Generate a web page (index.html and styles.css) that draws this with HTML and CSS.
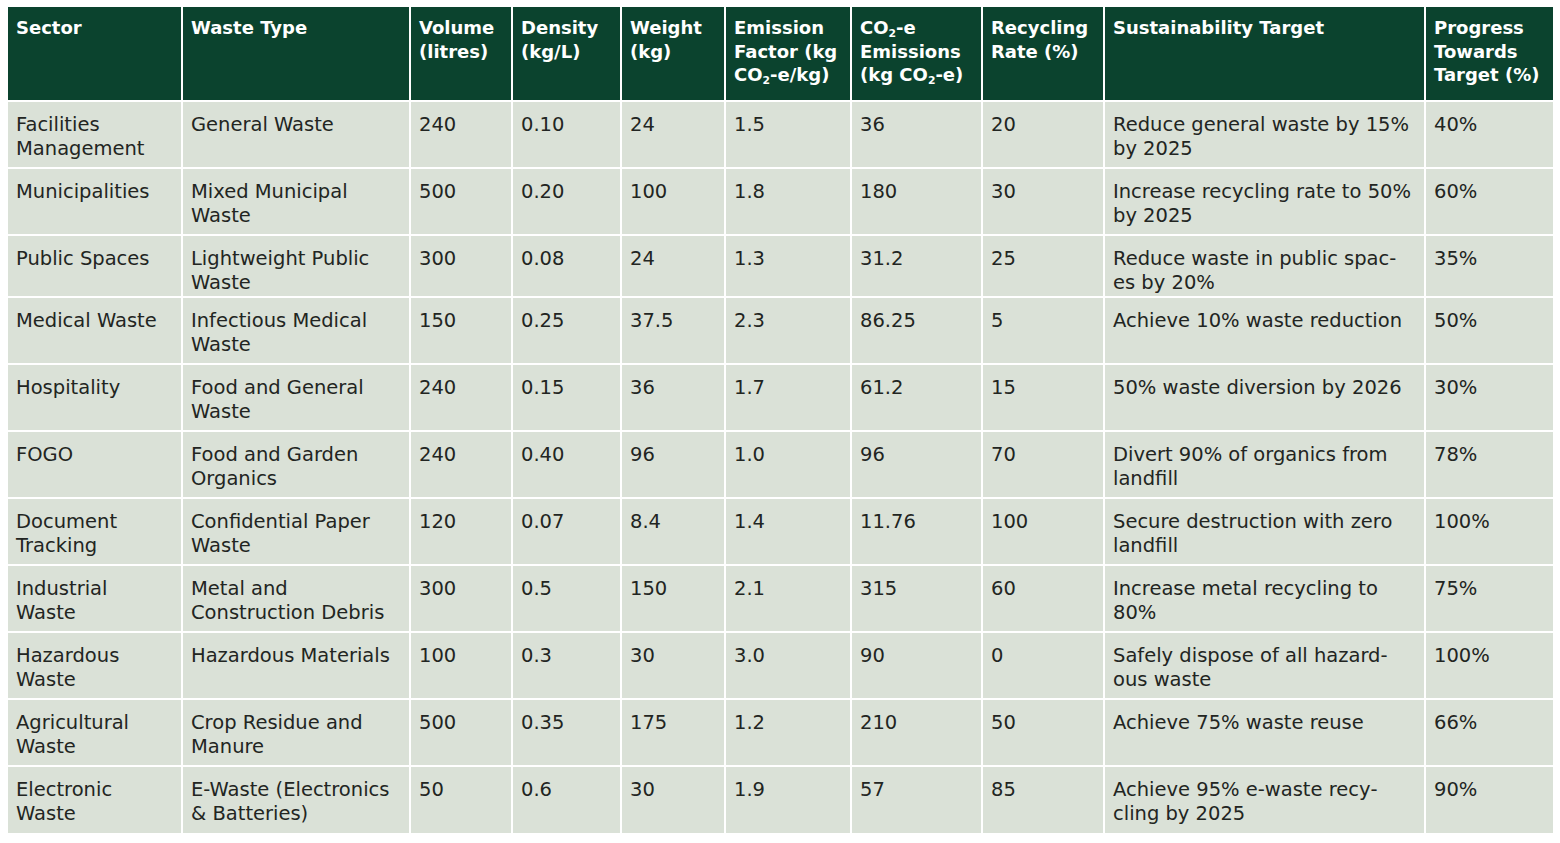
FILE: index.html
```html
<!DOCTYPE html>
<html lang="en">
<head>
<meta charset="utf-8">
<title>Waste Sector Sustainability Table</title>
<link rel="stylesheet" href="styles.css">
</head>
<body>
<table class="waste-table">
  <colgroup>
    <col class="c-sector">
    <col class="c-type">
    <col class="c-volume">
    <col class="c-density">
    <col class="c-weight">
    <col class="c-factor">
    <col class="c-emissions">
    <col class="c-rate">
    <col class="c-target">
    <col class="c-progress">
  </colgroup>
  <thead>
    <tr>
      <th>Sector</th>
      <th>Waste Type</th>
      <th>Volume (litres)</th>
      <th>Density (kg/L)</th>
      <th>Weight (kg)</th>
      <th>Emission Factor (kg CO<sub>2</sub>-e/kg)</th>
      <th>CO<sub>2</sub>-e Emissions (kg CO<sub>2</sub>-e)</th>
      <th>Recycling Rate (%)</th>
      <th>Sustainability Target</th>
      <th>Progress Towards Target (%)</th>
    </tr>
  </thead>
  <tbody>
    <tr>
      <td>Facilities Management</td><td>General Waste</td><td>240</td><td>0.10</td><td>24</td><td>1.5</td><td>36</td><td>20</td><td>Reduce general waste by 15% by 2025</td><td>40%</td>
    </tr>
    <tr>
      <td>Municipalities</td><td>Mixed Municipal Waste</td><td>500</td><td>0.20</td><td>100</td><td>1.8</td><td>180</td><td>30</td><td>Increase recycling rate to 50% by 2025</td><td>60%</td>
    </tr>
    <tr class="row-short">
      <td>Public Spaces</td><td>Lightweight Public Waste</td><td>300</td><td>0.08</td><td>24</td><td>1.3</td><td>31.2</td><td>25</td><td>Reduce waste in public spac&shy;es&nbsp;by 20%</td><td>35%</td>
    </tr>
    <tr>
      <td>Medical Waste</td><td>Infectious Medical Waste</td><td>150</td><td>0.25</td><td>37.5</td><td>2.3</td><td>86.25</td><td>5</td><td>Achieve 10% waste reduction</td><td>50%</td>
    </tr>
    <tr>
      <td>Hospitality</td><td>Food and General Waste</td><td>240</td><td>0.15</td><td>36</td><td>1.7</td><td>61.2</td><td>15</td><td>50% waste diversion by 2026</td><td>30%</td>
    </tr>
    <tr>
      <td>FOGO</td><td>Food and Garden Organics</td><td>240</td><td>0.40</td><td>96</td><td>1.0</td><td>96</td><td>70</td><td>Divert 90% of organics from landfill</td><td>78%</td>
    </tr>
    <tr>
      <td>Document Tracking</td><td>Confidential Paper Waste</td><td>120</td><td>0.07</td><td>8.4</td><td>1.4</td><td>11.76</td><td>100</td><td>Secure destruction with zero landfill</td><td>100%</td>
    </tr>
    <tr>
      <td>Industrial Waste</td><td>Metal and Construction Debris</td><td>300</td><td>0.5</td><td>150</td><td>2.1</td><td>315</td><td>60</td><td>Increase metal recycling to 80%</td><td>75%</td>
    </tr>
    <tr>
      <td>Hazardous Waste</td><td>Hazardous Materials</td><td>100</td><td>0.3</td><td>30</td><td>3.0</td><td>90</td><td>0</td><td>Safely dispose of all hazard&shy;ous&nbsp;waste</td><td>100%</td>
    </tr>
    <tr>
      <td>Agricultural Waste</td><td>Crop Residue and Manure</td><td>500</td><td>0.35</td><td>175</td><td>1.2</td><td>210</td><td>50</td><td>Achieve 75% waste reuse</td><td>66%</td>
    </tr>
    <tr>
      <td>Electronic Waste</td><td>E-Waste (Electronics &amp; Batteries)</td><td>50</td><td>0.6</td><td>30</td><td>1.9</td><td>57</td><td>85</td><td>Achieve 95% e-waste recy&shy;cling&nbsp;by 2025</td><td>90%</td>
    </tr>
  </tbody>
</table>
</body>
</html>
```

FILE: styles.css
```css
html, body {
  margin: 0;
  padding: 0;
  background: #ffffff;
}

body {
  padding: 7px 8px;
  font-family: "DejaVu Sans", "Noto Sans", sans-serif;
}

.waste-table {
  width: 1545px;
  table-layout: fixed;
  border-collapse: collapse;
  font-size: 19.5px;
  line-height: 24px;
  color: #222522;
}

.c-sector { width: 174px; }
.c-type { width: 228px; }
.c-volume { width: 102px; }
.c-density { width: 109px; }
.c-weight { width: 104px; }
.c-factor { width: 126px; }
.c-emissions { width: 131px; }
.c-rate { width: 122px; }
.c-target { width: 321px; }
.c-progress { width: 128px; }

.waste-table th,
.waste-table td {
  border: 2px solid #ffffff;
  vertical-align: top;
  text-align: left;
  padding: 11px 8px 0 8px;
}

.waste-table td:first-child {
  padding-right: 12px;
}

.waste-table th {
  background: #0b432e;
  color: #ffffff;
  font-weight: 700;
  font-size: 18px;
  line-height: 23.5px;
  padding-top: 9px;
  padding-right: 4px;
}

.waste-table tr > :first-child { border-left: 0; }
.waste-table tr > :last-child { border-right: 0; }
.waste-table thead th { border-top: 0; }
.waste-table tbody tr:last-child td { border-bottom: 0; }

.waste-table td {
  background: #dae1d7;
}

.waste-table thead tr { height: 94px; }
.waste-table tbody tr { height: 67px; }
.waste-table tbody tr.row-short { height: 62px; }

.waste-table sub {
  font-size: 0.6em;
  line-height: 0;
  vertical-align: -0.3em;
}
```
